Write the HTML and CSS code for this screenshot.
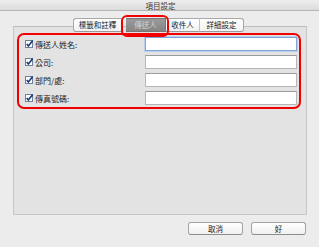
FILE: index.html
```html
<!DOCTYPE html>
<html lang="zh-Hant">
<head>
<meta charset="utf-8">
<title>項目設定</title>
<link rel="stylesheet" href="styles.css">
</head>
<body>
<div class="window">
  <div class="titlebar">項目設定</div>
  <div class="tabs">
    <div class="tab tab-first">標籤和註釋</div>
    <div class="tab tab-selected">傳送人</div>
    <div class="tab tab-third">收件人</div>
    <div class="tab tab-last">詳細設定</div>
  </div>
  <div class="tabbox">
    <div class="fields">
      <div class="row">
        <span class="check"><svg width="8" height="8" viewBox="0 0 8 8"><rect x="0.5" y="0.5" width="7" height="7" fill="#fff" stroke="#6f7f95"/><path d="M1.7 3.9 L3.4 6 L7.7 0.5" fill="none" stroke="#183a80" stroke-width="1.6"/></svg></span>
        <span class="label">傳送人姓名:</span>
        <span class="input input-focus"></span>
      </div>
      <div class="row">
        <span class="check"><svg width="8" height="8" viewBox="0 0 8 8"><rect x="0.5" y="0.5" width="7" height="7" fill="#fff" stroke="#6f7f95"/><path d="M1.7 3.9 L3.4 6 L7.7 0.5" fill="none" stroke="#183a80" stroke-width="1.6"/></svg></span>
        <span class="label">公司:</span>
        <span class="input"></span>
      </div>
      <div class="row">
        <span class="check"><svg width="8" height="8" viewBox="0 0 8 8"><rect x="0.5" y="0.5" width="7" height="7" fill="#fff" stroke="#6f7f95"/><path d="M1.7 3.9 L3.4 6 L7.7 0.5" fill="none" stroke="#183a80" stroke-width="1.6"/></svg></span>
        <span class="label">部門/處:</span>
        <span class="input"></span>
      </div>
      <div class="row">
        <span class="check"><svg width="8" height="8" viewBox="0 0 8 8"><rect x="0.5" y="0.5" width="7" height="7" fill="#fff" stroke="#6f7f95"/><path d="M1.7 3.9 L3.4 6 L7.7 0.5" fill="none" stroke="#183a80" stroke-width="1.6"/></svg></span>
        <span class="label">傳真號碼:</span>
        <span class="input"></span>
      </div>
    </div>
  </div>
  <div class="buttons">
    <div class="button">取消</div>
    <div class="button">好</div>
  </div>
</div>
</body>
</html>
```
FILE: styles.css
```css
html, body {
  margin: 0;
  padding: 0;
}
body {
  width: 319px;
  height: 247px;
  overflow: hidden;
  background: #ececec;
  font-family: "Noto Sans CJK TC", "Noto Sans CJK SC", "Liberation Sans", sans-serif;
  color: #222;
}
.window {
  display: flex;
  flex-direction: column;
  height: 247px;
}
.titlebar {
  height: 10px;
  line-height: 12px;
  border-bottom: 1px solid #b4b4b4;
  background: linear-gradient(#eeeeee, #dcdcdc);
  text-align: center;
  font-size: 7.5px;
  color: #3c3c3c;
  padding-left: 2px;
}
.tabs {
  display: flex;
  align-self: flex-start;
  margin: 7px 0 -6px 73px;
  height: 14px;
  position: relative;
  z-index: 1;
}
.tab {
  height: 12px;
  line-height: 12px;
  font-size: 7.5px;
  color: #222;
  background: linear-gradient(#ffffff, #f2f2f2);
  border-top: 1px solid #a8a8a8;
  border-bottom: 1px solid #9a9a9a;
  border-right: 1px solid #c4c4c4;
  padding: 0 4px;
  text-align: center;
}
.tab-first {
  border-left: 1px solid #a8a8a8;
  border-radius: 3px 0 0 3px;
  width: 41px;
  padding: 0 3px;
}
.tab-third {
  width: 25px;
}
.tab-last {
  border-right: 1px solid #a8a8a8;
  border-radius: 0 3px 3px 0;
  width: 35px;
}
.tab-selected {
  position: relative;
  width: 31px;
  margin-left: 4px;
  background: linear-gradient(#9a9a9a, #858585);
  color: #d4d4d4;
  border-color: #777;
}
.tab-selected::after {
  content: "";
  position: absolute;
  left: -5px;
  right: -4px;
  top: -4px;
  bottom: -6px;
  border: 2px solid #f00000;
  border-radius: 6px;
}
.tabbox {
  margin: 0 12px 0 13px;
  height: 181px;
  background: #e3e3e3;
  border: 1px solid #c6c6c6;
  border-top-color: #bcbcbc;
  padding: 6px 0 0 0;
}
.fields {
  margin: 0 5px 0 3px;
  border: 2px solid #f00000;
  border-radius: 7px;
  padding: 2px 2px 2px 6px;
  display: flex;
  flex-direction: column;
  gap: 4px;
}
.row {
  display: flex;
  align-items: center;
  height: 14px;
}
.check {
  width: 8px;
  height: 8px;
  display: flex;
  margin-right: 2px;
}
.label {
  font-size: 8px;
  flex: 1;
  color: #222;
}
.input {
  width: 150px;
  height: 12px;
  background: #fff;
  border: 1px solid #b6b6b6;
  border-top-color: #9a9a9a;
}
.input-focus {
  border: 1px solid #7fa6d6;
  box-shadow: 0 0 0 1px #b9cfeb;
}
.buttons {
  display: flex;
  justify-content: flex-end;
  gap: 8px;
  margin: 7px 13px 0 0;
}
.button {
  width: 53px;
  height: 11px;
  line-height: 11px;
  font-size: 7.5px;
  text-align: center;
  background: linear-gradient(#ffffff, #f0f0f0);
  border: 1px solid #a4a4a4;
  border-bottom-color: #8c8c8c;
  border-radius: 3px;
  color: #222;
}
```
